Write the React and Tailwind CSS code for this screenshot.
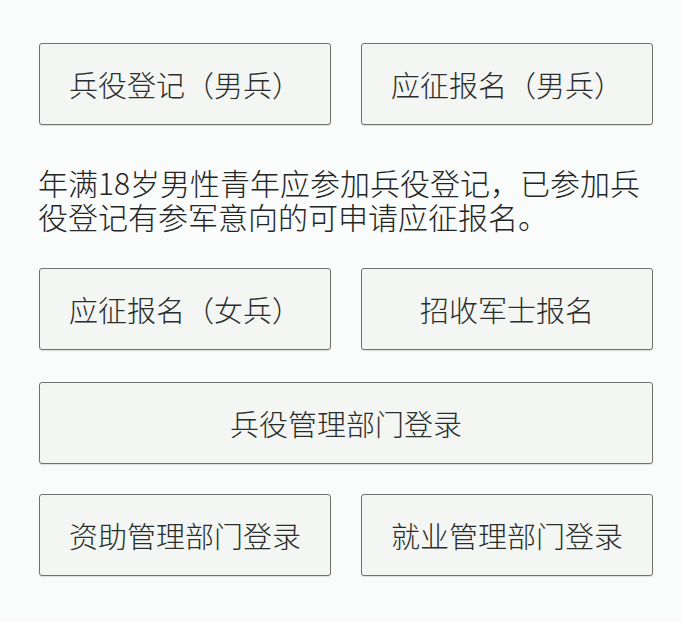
const cjk = { fontFamily: '"Noto Sans CJK SC", "Noto Sans", sans-serif' };

function EntryButton({ label }) {
  return (
    <button
      type="button"
      className="flex h-[82px] items-center justify-center rounded-[3px] border border-[#6f7171] bg-[#f3f6f3] text-[29px] font-light leading-none text-[#2a2d2d] shadow-[0_1px_1px_rgba(0,0,0,0.12)]"
      style={cjk}
    >
      {label}
    </button>
  );
}

export default function App() {
  return (
    <div className="min-h-[622px] w-[682px] bg-[#fafbfb] pl-[39px] pr-[29px] pt-[43px]" style={cjk}>
      <div className="grid grid-cols-2 gap-[30px]">
        <EntryButton label="兵役登记（男兵）" />
        <EntryButton label="应征报名（男兵）" />
      </div>

      <p className="mt-[40px] -ml-px text-[30px] font-light leading-[34px] text-[#232525]">
        年满18岁男性青年应参加兵役登记，已参加兵役登记有参军意向的可申请应征报名。
      </p>

      <div className="mt-[35px] grid grid-cols-2 gap-[30px]">
        <EntryButton label="应征报名（女兵）" />
        <EntryButton label="招收军士报名" />
      </div>

      <div className="mt-[32px] grid">
        <EntryButton label="兵役管理部门登录" />
      </div>

      <div className="mt-[30px] grid grid-cols-2 gap-[30px]">
        <EntryButton label="资助管理部门登录" />
        <EntryButton label="就业管理部门登录" />
      </div>
    </div>
  );
}
